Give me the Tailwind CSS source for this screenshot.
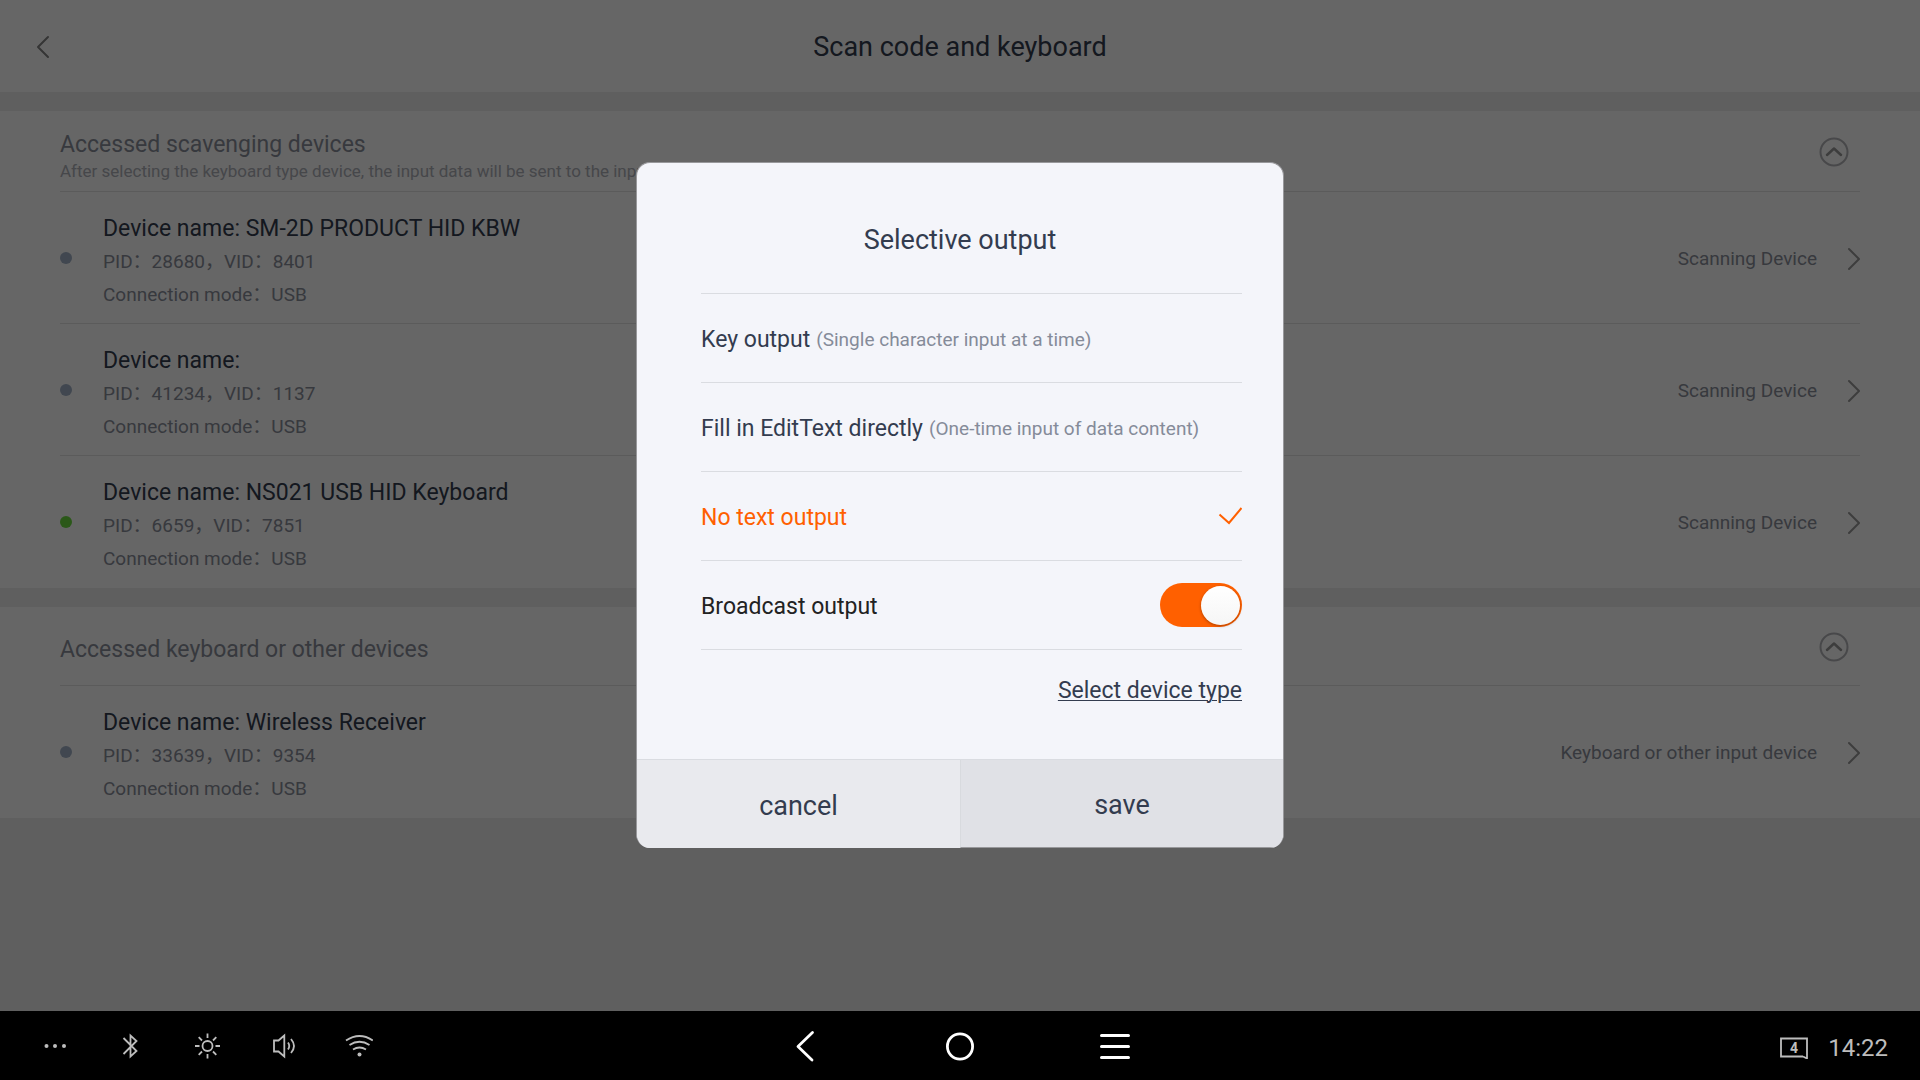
<!DOCTYPE html>
<html lang="en">
<head>
  <meta charset="UTF-8" />
  <meta name="viewport" content="width=device-width, initial-scale=1.0" />
  <title>Scan code and keyboard</title>
  <script src="https://cdn.jsdelivr.net/npm/@tailwindcss/browser@4"></script>
</head>
<body class="flex flex-col h-screen overflow-hidden bg-[#eeeeee] font-['Roboto','Noto_Sans_CJK_SC',sans-serif] text-[#333c4f]">
  <div class="relative flex-1 min-h-0">
    <!-- Page header -->
    <header class="grid grid-cols-[1fr_auto_1fr] items-center h-[92px] px-9 pt-0.5 bg-white">
      <button type="button" aria-label="Back" class="w-4">
        <svg class="w-4 h-6" viewBox="0 0 16 24" fill="none" stroke="#858585" stroke-width="2" stroke-linecap="round" stroke-linejoin="round">
          <path d="M12 2 L2 12 L12 22" />
        </svg>
      </button>
      <h1 class="text-[27px] leading-8">Scan code and keyboard</h1>
    </header>

    <!-- Scanners -->
    <section class="mt-[19px] px-[60px] bg-white">
      <div class="flex items-center justify-between h-[81px] pt-0.5 pr-[11px] border-b border-[#e4e4e4]">
        <div class="pt-2">
          <h2 class="text-[23px] leading-[30px] text-[#8b8f9b]">Accessed scavenging devices</h2>
          <p class="text-[17px] leading-[22px] text-[#aeb1b9]">After selecting the keyboard type device, the input data will be sent to the input box</p>
        </div>
        <button type="button" aria-label="Collapse scavenging devices">
          <svg class="w-[30px] h-[30px]" viewBox="0 0 30 30" fill="none" stroke-linecap="round" stroke-linejoin="round">
            <circle cx="15" cy="15" r="13.500" stroke="#b4b5b9" stroke-width="2" />
            <path d="M8 18 L15 11.500 L22 18" stroke="#9a9a9a" stroke-width="2.500" />
          </svg>
        </button>
      </div>

      <ul>
        <li class="flex items-center h-[132px] border-b border-[#e4e4e4]">
          <span class="w-3 h-3 mr-[31px] rounded-full bg-[#a2b2c8]"></span>
          <div class="flex-1 pt-2 leading-[33px]">
            <h3 class="text-[23px]">Device name: SM-2D PRODUCT HID KBW</h3>
            <p class="text-[19px] text-[#8b8f9b]">PID：28680，VID：8401</p>
            <p class="text-[19px] text-[#8b8f9b]">Connection mode：USB</p>
          </div>
          <a href="#" class="flex items-center gap-[30px] pt-0.5 text-[19px] text-[#8b8f9b]">
            <span class="pt-0.5">Scanning Device</span>
            <svg class="w-[13px] h-6" viewBox="0 0 13 24" fill="none" stroke="#9a9a9a" stroke-width="2" stroke-linecap="round" stroke-linejoin="round">
              <path d="M2 2 L12 12 L2 22" />
            </svg>
          </a>
        </li>
        <li class="flex items-center h-[132px] border-b border-[#e4e4e4]">
          <span class="w-3 h-3 mr-[31px] rounded-full bg-[#a2b2c8]"></span>
          <div class="flex-1 pt-2 leading-[33px]">
            <h3 class="text-[23px]">Device name:</h3>
            <p class="text-[19px] text-[#8b8f9b]">PID：41234，VID：1137</p>
            <p class="text-[19px] text-[#8b8f9b]">Connection mode：USB</p>
          </div>
          <a href="#" class="flex items-center gap-[30px] pt-0.5 text-[19px] text-[#8b8f9b]">
            <span class="pt-0.5">Scanning Device</span>
            <svg class="w-[13px] h-6" viewBox="0 0 13 24" fill="none" stroke="#9a9a9a" stroke-width="2" stroke-linecap="round" stroke-linejoin="round">
              <path d="M2 2 L12 12 L2 22" />
            </svg>
          </a>
        </li>
        <li class="flex items-center h-[132px] pb-px">
          <span class="w-3 h-3 mr-[31px] rounded-full bg-[#6bdd40]"></span>
          <div class="flex-1 pt-2 leading-[33px]">
            <h3 class="text-[23px]">Device name: NS021 USB HID Keyboard</h3>
            <p class="text-[19px] text-[#8b8f9b]">PID：6659，VID：7851</p>
            <p class="text-[19px] text-[#8b8f9b]">Connection mode：USB</p>
          </div>
          <a href="#" class="flex items-center gap-[30px] pt-0.5 text-[19px] text-[#8b8f9b]">
            <span class="pt-0.5">Scanning Device</span>
            <svg class="w-[13px] h-6" viewBox="0 0 13 24" fill="none" stroke="#9a9a9a" stroke-width="2" stroke-linecap="round" stroke-linejoin="round">
              <path d="M2 2 L12 12 L2 22" />
            </svg>
          </a>
        </li>
      </ul>
    </section>

    <!-- Keyboards and the rest -->
    <section class="mt-[19px] px-[60px] bg-white">
      <div class="flex items-center justify-between h-[79px] pt-0.5 pr-[11px] border-b border-[#e4e4e4]">
        <h2 class="pt-1.5 text-[23px] leading-[30px] text-[#8b8f9b]">Accessed keyboard or other devices</h2>
        <button type="button" aria-label="Collapse keyboard devices">
          <svg class="w-[30px] h-[30px]" viewBox="0 0 30 30" fill="none" stroke-linecap="round" stroke-linejoin="round">
            <circle cx="15" cy="15" r="13.500" stroke="#b4b5b9" stroke-width="2" />
            <path d="M8 18 L15 11.500 L22 18" stroke="#9a9a9a" stroke-width="2.500" />
          </svg>
        </button>
      </div>

      <ul>
        <li class="flex items-center h-[132px] pb-px">
          <span class="w-3 h-3 mr-[31px] rounded-full bg-[#a2b2c8]"></span>
          <div class="flex-1 pt-2 leading-[33px]">
            <h3 class="text-[23px]">Device name: Wireless Receiver</h3>
            <p class="text-[19px] text-[#8b8f9b]">PID：33639，VID：9354</p>
            <p class="text-[19px] text-[#8b8f9b]">Connection mode：USB</p>
          </div>
          <a href="#" class="flex items-center gap-[30px] pt-0.5 text-[19px] text-[#8b8f9b]">
            <span class="pt-0.5">Keyboard or other input device</span>
            <svg class="w-[13px] h-6" viewBox="0 0 13 24" fill="none" stroke="#9a9a9a" stroke-width="2" stroke-linecap="round" stroke-linejoin="round">
              <path d="M2 2 L12 12 L2 22" />
            </svg>
          </a>
        </li>
      </ul>
    </section>

    <!-- Output dialog -->
    <div class="absolute inset-0 flex items-center justify-center pb-px bg-black/60">
      <form role="dialog" aria-labelledby="dialog-title" class="w-[648px] rounded-[14px] border border-b-0 border-[#98989b] bg-[#f4f5fa] overflow-hidden">
        <div class="pl-16 pr-[41px]">
          <h2 id="dialog-title" class="flex items-center justify-center h-[130px] pt-6 -ml-[23px] text-[27px]">Selective output</h2>
          <button type="button" class="flex items-center gap-1.5 w-full h-[89px] pt-1 border-t border-[#dadce1] text-[23px] text-left">
            Key output
            <span class="text-[19px] text-[#858b99]">(Single character input at a time)</span>
          </button>
          <button type="button" class="flex items-center gap-1.5 w-full h-[89px] pt-1 border-t border-[#dadce1] text-[23px] text-left">
            Fill in EditText directly
            <span class="text-[19px] text-[#858b99]">(One-time input of data content)</span>
          </button>
          <button type="button" class="flex items-center justify-between w-full h-[89px] border-t border-[#dadce1] text-[23px] text-[#ff6000]">
            <span class="pt-1">No text output</span>
            <svg class="w-6 h-[18px]" viewBox="0 0 24 18" fill="none" stroke="#ff6000" stroke-width="2">
              <path d="M1.500 7.500 L11 16 L23.500 1" />
            </svg>
          </button>
          <div class="flex items-center justify-between h-[90px] border-y border-[#dadce1] text-[23px] text-[#222222]">
            <label for="broadcast" class="pt-1">Broadcast output</label>
            <input id="broadcast" type="checkbox" checked class="appearance-none flex items-center justify-end w-[82px] h-11 pr-0.5 rounded-full bg-[#ff6000] before:w-[39px] before:h-[39px] before:rounded-full before:bg-linear-to-b before:from-white before:to-[#f6f6f6] before:shadow-[0_1px_3px_rgba(0,0,0,0.35)]" />
          </div>
          <div class="flex justify-end h-[109px] pt-6 leading-[34px]">
            <a href="#" class="text-[23px] underline underline-offset-2 decoration-1">Select device type</a>
          </div>
        </div>
        <div class="grid grid-cols-2 h-[89px] border-t border-[#dadce1] text-[27px]">
          <button type="button" class="pt-1 bg-[#e9eaee]">cancel</button>
          <button type="submit" class="pt-1 border-l border-b border-l-[#d8dade] border-b-[#98989b] bg-[#e0e1e6]">save</button>
        </div>
      </form>
    </div>
  </div>

  <!-- System bar -->
  <nav class="grid grid-cols-3 items-center h-[69px] bg-black text-[#bdbdbd]">
    <div class="flex pl-[17px]">
      <button type="button" aria-label="More" class="flex justify-center w-[76px]">
        <svg class="w-7 h-7" viewBox="0 0 28 28" fill="currentColor">
          <circle cx="5.500" cy="14" r="2" /><circle cx="14" cy="14" r="2" /><circle cx="23" cy="14" r="2" />
        </svg>
      </button>
      <button type="button" aria-label="Bluetooth" class="flex justify-center w-[76px]">
        <svg class="w-7 h-7" viewBox="0 0 28 28" fill="none" stroke="currentColor" stroke-width="1.800">
          <path d="M6.500 6 L19.500 19 L13.500 24.500 V3.500 L19.500 9 L6.500 22" />
        </svg>
      </button>
      <button type="button" aria-label="Brightness" class="flex justify-center w-[76px]">
        <svg class="w-7 h-7" viewBox="0 0 28 28" fill="none" stroke="currentColor" stroke-width="1.800">
          <circle cx="14.500" cy="14" r="5" />
          <path d="M14.500 1.500 V6 M14.500 22 V26.500 M2 14 H6.500 M22.500 14 H27 M5.700 5.200 L9 8.500 M20 19.500 L23.300 22.800 M5.700 22.800 L9 19.500 M20 8.500 L23.300 5.200" />
        </svg>
      </button>
      <button type="button" aria-label="Volume" class="flex justify-center w-[76px]">
        <svg class="w-7 h-7" viewBox="0 0 28 28" fill="none" stroke="currentColor" stroke-width="1.800">
          <path d="M5 8.500 H9.500 L15.300 3.500 V24.500 L9.500 19.500 H5 Z" />
          <path d="M19 10.500 Q21.500 14 19 17.500 M22 7 Q28 14 22 21" />
        </svg>
      </button>
      <button type="button" aria-label="Wi-Fi" class="flex justify-center w-[76px]">
        <svg class="w-7 h-7" viewBox="0 0 28 28" fill="none" stroke="currentColor" stroke-width="1.800">
          <path d="M1 8.500 Q14.500 -0.500 27.800 8.500 M4.500 13 Q14.500 6.500 24.500 13 M8 17.500 Q14.500 13.500 21 17.500" />
          <circle cx="14.500" cy="22.500" r="2" fill="currentColor" stroke="none" />
        </svg>
      </button>
    </div>

    <div class="flex justify-center text-white">
      <button type="button" aria-label="Back" class="flex justify-center w-[155px]">
        <svg class="w-8 h-8" viewBox="0 0 32 32" fill="none" stroke="currentColor" stroke-width="2.800" stroke-linecap="round" stroke-linejoin="round">
          <path d="M23.500 2.500 L9 16.500 L23 30" />
        </svg>
      </button>
      <button type="button" aria-label="Home" class="flex justify-center w-[155px]">
        <svg class="w-8 h-8" viewBox="0 0 32 32" fill="none" stroke="currentColor" stroke-width="2.800">
          <circle cx="16" cy="16.500" r="12.600" />
        </svg>
      </button>
      <button type="button" aria-label="Recent apps" class="flex justify-center w-[155px]">
        <svg class="w-8 h-8" viewBox="0 0 32 32" fill="none" stroke="currentColor" stroke-width="3" stroke-linecap="round">
          <path d="M2.500 5.500 H29.500 M2.500 16.500 H29.500 M2.500 27.500 H29.500" />
        </svg>
      </button>
    </div>

    <div class="flex items-center justify-end gap-5 pt-1 pr-8">
      <svg class="w-7 h-[22px]" viewBox="0 0 28 22" fill="none" stroke="currentColor" stroke-width="1.800">
        <path d="M23 19.500 H1 V1.500 H27 V21.500 L23 19.500" />
        <text x="14" y="15.500" text-anchor="middle" fill="currentColor" stroke="none" font-size="14" font-weight="700">4</text>
      </svg>
      <time class="text-2xl leading-8">14:22</time>
    </div>
  </nav>
</body>
</html>
